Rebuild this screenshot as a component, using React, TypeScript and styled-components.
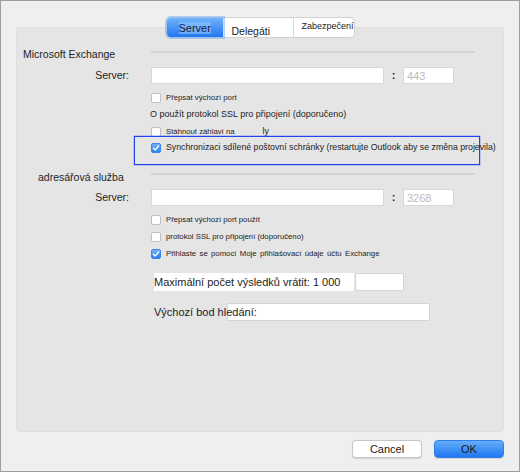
import React from "react";
import styled, { createGlobalStyle, css } from "styled-components";

const GlobalStyle = createGlobalStyle`
  html, body {
    margin: 0;
    padding: 0;
    background: #ffffff;
  }
  body {
    font-family: "Liberation Sans", Arial, sans-serif;
    color: #1d1d1d;
  }
`;

const Window = styled.div`
  box-sizing: border-box;
  width: 520px;
  height: 472px;
  border: 1px solid #9d9d9d;
  background: #efefef;
  padding: 16px 15px 0 15px;
  display: flex;
  flex-direction: column;
`;

const TabBar = styled.div`
  position: relative;
  z-index: 1;
  display: flex;
  justify-content: center;
  align-items: center;
  height: 21px;
  margin-bottom: -11px;
`;

const TabGroup = styled.div`
  display: flex;
  height: 19px;
  background: #ffffff;
  border-radius: 4px;
  box-shadow: 0 0 0 1px #d2d2d2, 0 1px 1px rgba(0, 0, 0, 0.08);
`;

const Tab = styled.div<{
  $w: number;
  $size: number;
  $top: number;
  $left: number;
  $active?: boolean;
}>`
  box-sizing: border-box;
  width: ${(p) => p.$w}px;
  height: 19px;
  padding: ${(p) => p.$top}px 0 0 ${(p) => p.$left}px;
  font-size: ${(p) => p.$size}px;
  line-height: 12px;
  white-space: nowrap;
  color: #1a1a1a;

  & + & {
    border-left: 1px solid #dadada;
  }
  &:last-child {
    border-radius: 0 4px 4px 0;
  }

  ${(p) =>
    p.$active &&
    css`
      background: linear-gradient(#72b3fb, #2176f0);
      border-radius: 4px 0 0 4px;
      box-shadow: 0 0 0 2px rgba(120, 175, 245, 0.55);
      color: #16223a;
    `}
`;

const TabText = styled.span<{ $hl?: boolean }>`
  ${(p) =>
    p.$hl &&
    css`
      background: rgba(150, 200, 255, 0.55);
    `}
`;

const Panel = styled.div`
  box-sizing: border-box;
  height: 405px;
  background: #e5e5e5;
  border-radius: 4px;
  box-shadow: inset 0 0 0 1px #dfdfdf;
  padding-top: 20px;
  display: flex;
  flex-direction: column;
`;

const SectionHeader = styled.div<{ $mt: number }>`
  display: grid;
  grid-template-columns: 135px 324px;
  height: 14px;
  margin-top: ${(p) => p.$mt}px;
`;

const SectionTitle = styled.div<{ $indent: number }>`
  padding-left: ${(p) => p.$indent}px;
  font-size: 10.5px;
  line-height: 14px;
  white-space: nowrap;
`;

const SectionRule = styled.div<{ $top: number }>`
  height: 2px;
  margin-top: ${(p) => p.$top}px;
  background: #d3d3d3;
`;

const FieldRow = styled.div<{ $mt: number }>`
  display: grid;
  grid-template-columns: 135px 233px 19px 51px;
  height: 17px;
  margin-top: ${(p) => p.$mt}px;
`;

const FieldLabel = styled.label`
  text-align: right;
  padding-right: 22px;
  font-size: 10.5px;
  line-height: 17px;
`;

const TextInput = styled.input`
  box-sizing: border-box;
  width: 100%;
  height: 17px;
  margin: 0;
  padding: 0 3px;
  border: 1px solid #d8d8d8;
  background: #ffffff;
  font-family: inherit;
  font-size: 11px;
  color: #1d1d1d;
  outline: none;

  &::placeholder {
    color: #bcbcbc;
  }
`;

const Colon = styled.span`
  text-align: center;
  font-size: 11px;
  font-weight: bold;
  line-height: 17px;
`;

const CheckRow = styled.div<{ $mt?: number; $indent?: number }>`
  display: flex;
  align-items: center;
  gap: 5px;
  height: 17px;
  margin-top: ${(p) => p.$mt ?? 0}px;
  margin-left: ${(p) => p.$indent ?? 135}px;
  white-space: nowrap;
`;

const Box = styled.span<{ $checked?: boolean }>`
  box-sizing: border-box;
  flex: none;
  width: 10px;
  height: 10px;
  border-radius: 2px;
  display: flex;
  align-items: center;
  justify-content: center;
  background: ${(p) =>
    p.$checked ? "linear-gradient(#6db1fb, #2c7ff2)" : "#ffffff"};
  border: 1px solid ${(p) => (p.$checked ? "#3a84ea" : "#bfbfbf")};
`;

const CheckText = styled.span<{ $size: number; $ws?: number; $gap?: number }>`
  font-size: ${(p) => p.$size}px;
  word-spacing: ${(p) => p.$ws ?? 0}px;
  margin-left: ${(p) => p.$gap ?? 0}px;
  line-height: 17px;
`;

const NoteRow = styled.div`
  height: 17px;
  margin-left: 134px;
  font-size: 9px;
  line-height: 17px;
  white-space: nowrap;
`;

const Callout = styled.div`
  box-sizing: border-box;
  width: 346px;
  height: 29px;
  margin: -4px 0 0 118px;
  padding: 2px 0 0 16px;
  border: 1px solid #2443ee;
  box-shadow: 0 0 0 0.5px rgba(36, 67, 238, 0.45);
`;

const ResultRow = styled.div<{ $mt: number }>`
  display: flex;
  height: 18px;
  margin: ${(p) => p.$mt}px 0 0 138px;
`;

const ResultLabel = styled.span<{ $w: number; $filled?: boolean }>`
  position: relative;
  z-index: 1;
  flex: none;
  width: ${(p) => p.$w}px;
  font-size: 11px;
  line-height: 18px;
  white-space: nowrap;
  background: ${(p) => (p.$filled ? "#ffffff" : "transparent")};
`;

const ResultInput = styled.span<{ $w: number; $gap?: number }>`
  box-sizing: border-box;
  flex: none;
  width: ${(p) => p.$w}px;
  height: 18px;
  margin-left: ${(p) => p.$gap ?? 0}px;
  background: #ffffff;
  border: 1px solid #d4d4d4;
`;

const Footer = styled.div`
  display: flex;
  justify-content: flex-end;
  gap: 12px;
  margin-top: 8px;
`;

const Button = styled.button<{ $primary?: boolean }>`
  box-sizing: border-box;
  width: 70px;
  height: 18px;
  padding: 0;
  border-radius: 4px;
  font-family: inherit;
  font-size: 11px;
  line-height: 16px;
  color: #1a1a1a;
  border: 1px solid ${(p) => (p.$primary ? "#2f7de9" : "#c6c6c6")};
  background: ${(p) =>
    p.$primary ? "linear-gradient(#66adfb, #1f77f0)" : "#ffffff"};
  box-shadow: 0 0.5px 1px rgba(0, 0, 0, 0.12);
`;

function Check() {
  return (
    <svg width="8" height="8" viewBox="0 0 8 8">
      <path
        d="M1.4 4.2 L3.2 6 L6.6 1.8"
        fill="none"
        stroke="#ffffff"
        strokeWidth="1.3"
        strokeLinecap="round"
        strokeLinejoin="round"
      />
    </svg>
  );
}

function CheckBox({ checked }: { checked?: boolean }) {
  return <Box $checked={checked}>{checked && <Check />}</Box>;
}

export default function App() {
  return (
    <>
      <GlobalStyle />
      <Window>
        <TabBar>
          <TabGroup>
            <Tab $w={56} $size={11} $top={4} $left={12} $active>
              <TabText $hl>Server</TabText>
            </Tab>
            <Tab $w={70} $size={10.5} $top={7} $left={8}>
              Delegáti
            </Tab>
            <Tab $w={61} $size={9} $top={2} $left={8}>
              Zabezpečení
            </Tab>
          </TabGroup>
        </TabBar>

        <Panel>
          <SectionHeader $mt={0}>
            <SectionTitle $indent={7}>Microsoft Exchange</SectionTitle>
            <SectionRule $top={4} />
          </SectionHeader>

          <FieldRow $mt={6}>
            <FieldLabel>Server:</FieldLabel>
            <TextInput readOnly />
            <Colon>:</Colon>
            <TextInput readOnly placeholder="443" />
          </FieldRow>

          <CheckRow $mt={5}>
            <CheckBox />
            <CheckText $size={7.75}>Přepsat výchozí port</CheckText>
          </CheckRow>
          <NoteRow>O použít protokol SSL pro připojení (doporučeno)</NoteRow>
          <CheckRow>
            <CheckBox />
            <CheckText $size={7.75}>Stáhnout záhlaví na</CheckText>
            <CheckText $size={9} $gap={23}>
              ly
            </CheckText>
          </CheckRow>

          <Callout>
            <CheckRow $indent={0}>
              <CheckBox checked />
              <CheckText $size={8.75}>
                Synchronizaci sdílené poštovní schránky (restartujte Outlook aby
                se změna projevila)
              </CheckText>
            </CheckRow>
          </Callout>

          <SectionHeader $mt={5}>
            <SectionTitle $indent={22}>adresářová služba</SectionTitle>
            <SectionRule $top={3} />
          </SectionHeader>

          <FieldRow $mt={5}>
            <FieldLabel>Server:</FieldLabel>
            <TextInput readOnly />
            <Colon>:</Colon>
            <TextInput readOnly placeholder="3268" />
          </FieldRow>

          <CheckRow $mt={5}>
            <CheckBox />
            <CheckText $size={7.75}>Přepsat výchozí port použít</CheckText>
          </CheckRow>
          <CheckRow>
            <CheckBox />
            <CheckText $size={7.75}>
              protokol SSL pro připojení (doporučeno)
            </CheckText>
          </CheckRow>
          <CheckRow>
            <CheckBox checked />
            <CheckText $size={7.75} $ws={1.2}>
              Přihlaste se pomocí Moje přihlašovací údaje účtu Exchange
            </CheckText>
          </CheckRow>

          <ResultRow $mt={11}>
            <ResultLabel $w={200} $filled>
              Maximální počet výsledků vrátit: 1 000
            </ResultLabel>
            <ResultInput $w={49} $gap={1} />
          </ResultRow>

          <ResultRow $mt={12}>
            <ResultLabel $w={73}>Výchozí bod hledání:</ResultLabel>
            <ResultInput $w={203} />
          </ResultRow>
        </Panel>

        <Footer>
          <Button>Cancel</Button>
          <Button $primary>OK</Button>
        </Footer>
      </Window>
    </>
  );
}
